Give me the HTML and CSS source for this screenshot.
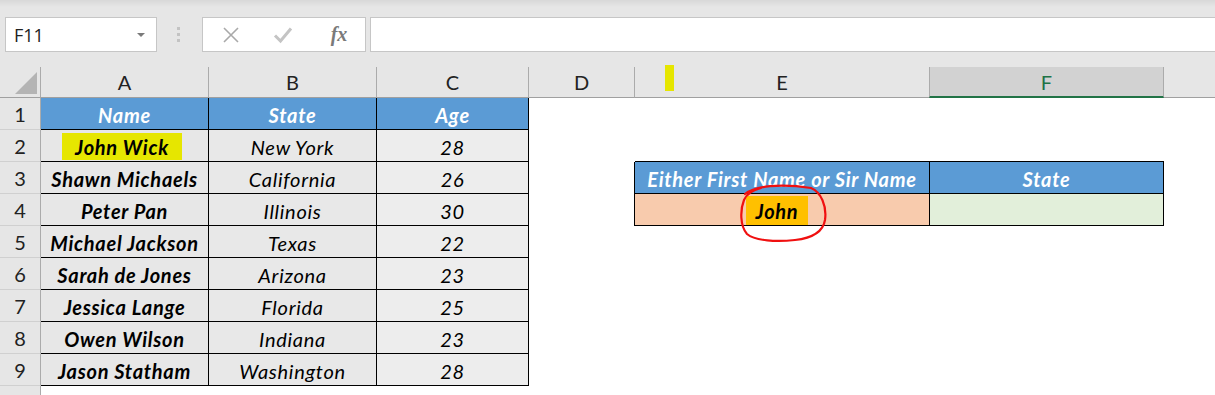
FILE: index.html
```html
<!DOCTYPE html>
<html lang="en">
<head>
    <meta charset="UTF-8">
    <meta name="viewport" content="width=device-width, initial-scale=1.0">
    <title>Lookup by First Name or Sir Name</title>
    <link rel="stylesheet" href="styles.css">
</head>
<body>
    <!-- Formula bar -->
    <div class="toolbar">
        <div class="formula-row">
            <div class="name-box">
                <span>F11</span>
                <span class="caret"></span>
            </div>
            <div class="grip"><i></i><i></i><i></i></div>
            <div class="fx-box">
                <span class="fx-slot">
                    <svg width="18" height="18" viewBox="0 0 18 18"><path d="M2 2L16 16M16 2L2 16" stroke="#a9a9a9" stroke-width="1.6" fill="none"/></svg>
                </span>
                <span class="fx-slot">
                    <svg width="20" height="18" viewBox="0 0 20 18"><path d="M2 9.5L7.5 15L18 2.5" stroke="#c4c4c4" stroke-width="3" fill="none"/></svg>
                </span>
                <span class="fx-slot fx">fx</span>
            </div>
            <div class="formula-input"></div>
        </div>
    </div>

    <!-- Sheet -->
    <div class="sheet">
        <div class="row col-heads">
            <div class="corner"><span class="corner-tri"></span></div>
            <div class="ch">A</div>
            <div class="ch">B</div>
            <div class="ch">C</div>
            <div class="ch">D</div>
            <div class="ch">E</div>
            <div class="ch selected">F</div>
            <div class="ch last"></div>
        </div>

        <div class="row">
            <div class="rh">1</div>
            <div class="c d head">Name</div>
            <div class="c d head">State</div>
            <div class="c d head">Age</div>
            <div class="c"></div>
            <div class="c"></div>
            <div class="c"></div>
            <div class="c"></div>
        </div>
        <div class="row">
            <div class="rh">2</div>
            <div class="c d name"><span class="hl-wick">John Wick</span></div>
            <div class="c d state">New York</div>
            <div class="c d age">28</div>
            <div class="c"></div>
            <div class="c edge-b"></div>
            <div class="c edge-b"></div>
            <div class="c"></div>
        </div>
        <div class="row">
            <div class="rh">3</div>
            <div class="c d name">Shawn Michaels</div>
            <div class="c d state">California</div>
            <div class="c d age">26</div>
            <div class="c edge-r"></div>
            <div class="c d head">Either First Name or Sir Name</div>
            <div class="c d head">State</div>
            <div class="c"></div>
        </div>
        <div class="row">
            <div class="rh">4</div>
            <div class="c d name">Peter Pan</div>
            <div class="c d state">Illinois</div>
            <div class="c d age">30</div>
            <div class="c edge-r"></div>
            <div class="c d lookup"><span class="hl-john">John</span></div>
            <div class="c d result"></div>
            <div class="c"></div>
        </div>
        <div class="row">
            <div class="rh">5</div>
            <div class="c d name">Michael Jackson</div>
            <div class="c d state">Texas</div>
            <div class="c d age">22</div>
            <div class="c"></div>
            <div class="c"></div>
            <div class="c"></div>
            <div class="c"></div>
        </div>
        <div class="row">
            <div class="rh">6</div>
            <div class="c d name">Sarah de Jones</div>
            <div class="c d state">Arizona</div>
            <div class="c d age">23</div>
            <div class="c"></div>
            <div class="c"></div>
            <div class="c"></div>
            <div class="c"></div>
        </div>
        <div class="row">
            <div class="rh">7</div>
            <div class="c d name">Jessica Lange</div>
            <div class="c d state">Florida</div>
            <div class="c d age">25</div>
            <div class="c"></div>
            <div class="c"></div>
            <div class="c"></div>
            <div class="c"></div>
        </div>
        <div class="row">
            <div class="rh">8</div>
            <div class="c d name">Owen Wilson</div>
            <div class="c d state">Indiana</div>
            <div class="c d age">23</div>
            <div class="c"></div>
            <div class="c"></div>
            <div class="c"></div>
            <div class="c"></div>
        </div>
        <div class="row">
            <div class="rh">9</div>
            <div class="c d name">Jason Statham</div>
            <div class="c d state">Washington</div>
            <div class="c d age">28</div>
            <div class="c"></div>
            <div class="c"></div>
            <div class="c"></div>
            <div class="c"></div>
        </div>
        <div class="row">
            <div class="rh">10</div>
            <div class="c"></div>
            <div class="c"></div>
            <div class="c"></div>
            <div class="c"></div>
            <div class="c"></div>
            <div class="c"></div>
            <div class="c"></div>
        </div>
    </div>

    <!-- annotations drawn over the sheet -->
    <span class="marker"></span>
    <svg class="scribble" width="100" height="70" viewBox="0 0 100 70">
        <path d="M10 14C20 6 45 3 76 8C86 12 92 26 90 40C88 52 78 58 60 60C42 62 20 61 12 54C5 46 5 30 9 20C12 13 18 10 26 8" stroke="#f01010" stroke-width="2.2" fill="none" stroke-linecap="round"/>
    </svg>
</body>
</html>
```

FILE: styles.css
```css
body {
    margin: 0;
    background: #fff;
    font-family: Lato, "Open Sans", sans-serif;
    color: #000;
    overflow: hidden;
}

/* formula bar */
.toolbar {
    height: 67px;
    box-sizing: border-box;
    padding-top: 17px;
    background: linear-gradient(#d8d8d8, #e6e6e6 7px);
}
.formula-row {
    display: flex;
    height: 35px;
}
.name-box {
    width: 152px;
    margin-left: 5px;
    box-sizing: border-box;
    border: 1px solid #c6c6c6;
    background: #fff;
    display: flex;
    align-items: center;
    justify-content: space-between;
    padding: 0 11px 0 8px;
    font-family: "Open Sans", sans-serif;
    font-size: 18px;
    color: #222;
}
.caret {
    border-left: 4px solid transparent;
    border-right: 4px solid transparent;
    border-top: 4px solid #7a7a7a;
}
.grip {
    width: 42px;
    margin-right: 3px;
    display: flex;
    flex-direction: column;
    align-items: center;
    justify-content: center;
    gap: 3px;
}
.grip i {
    width: 3px;
    height: 3px;
    background: #c3c3c3;
}
.fx-box {
    width: 164px;
    box-sizing: border-box;
    border: 1px solid #c6c6c6;
    background: #fff;
    display: flex;
    align-items: center;
    padding-left: 2px;
}
.fx-slot {
    width: 52px;
    display: flex;
    justify-content: center;
}
.fx {
    padding-left: 4px;
    font-family: "Liberation Serif", serif;
    font-style: italic;
    font-weight: bold;
    font-size: 20px;
    color: #7a7a7a;
}
.formula-input {
    flex: 1;
    margin-left: 4px;
    border: 1px solid #c6c6c6;
    border-right: none;
    background: #fff;
}

/* grid */
.row {
    display: grid;
    grid-template-columns: 41px 168px 168px 152px 106px 295px 234px 1fr;
    height: 32px;
}
.row > div {
    box-sizing: border-box;
    display: flex;
    align-items: center;
    justify-content: center;
}
.col-heads {
    height: 31px;
    background: #e6e6e6;
}
.corner, .ch {
    border-right: 1px solid #ababab;
    border-bottom: 1px solid #a0a0a0;
    font-size: 20px;
    color: #222;
}
.corner {
    position: relative;
}
.corner-tri {
    position: absolute;
    right: 3px;
    bottom: 3px;
    width: 0;
    height: 0;
    border-left: 22px solid transparent;
    border-bottom: 22px solid #b4b4b4;
}
.ch.selected {
    background: #d2d2d2;
    color: #217346;
    border-left: 1px solid #ababab;
    border-bottom: 2px solid #217346;
    margin-left: -1px;
}
.ch.last {
    border-right: none;
}
.rh {
    background: #e6e6e6;
    border-right: 1px solid #ababab;
    border-bottom: 1px solid #d0d0d0;
    font-size: 20px;
    color: #222;
}

/* data cells */
.d {
    border-right: 1px solid #000;
    border-bottom: 1px solid #000;
    font-size: 20px;
    letter-spacing: 0.7px;
    font-style: italic;
    padding-top: 2px;
}
.head {
    background: #5b9bd5;
    color: #fff;
    font-weight: bold;
}
.name {
    background: #e7e7e7;
    font-weight: bold;
}
.state {
    background: #e8e8e8;
}
.age {
    background: #ededed;
}
.lookup {
    background: #f8cbad;
    font-weight: bold;
    padding-right: 10px;
}
.result {
    background: #e2efda;
}
.edge-r {
    border-right: 1px solid #000;
}
.edge-b {
    border-bottom: 1px solid #000;
}
.hl-wick {
    background: #e6e600;
    padding: 2px 13px 1px;
    margin-right: 5px;
}
.hl-john {
    background: #ffc000;
    padding: 3px 10px 2px;
}

/* annotations */
.marker {
    position: absolute;
    left: 665px;
    top: 65px;
    width: 9px;
    height: 26px;
    background: #e6e600;
}
.scribble {
    position: absolute;
    left: 735px;
    top: 180px;
}
```
